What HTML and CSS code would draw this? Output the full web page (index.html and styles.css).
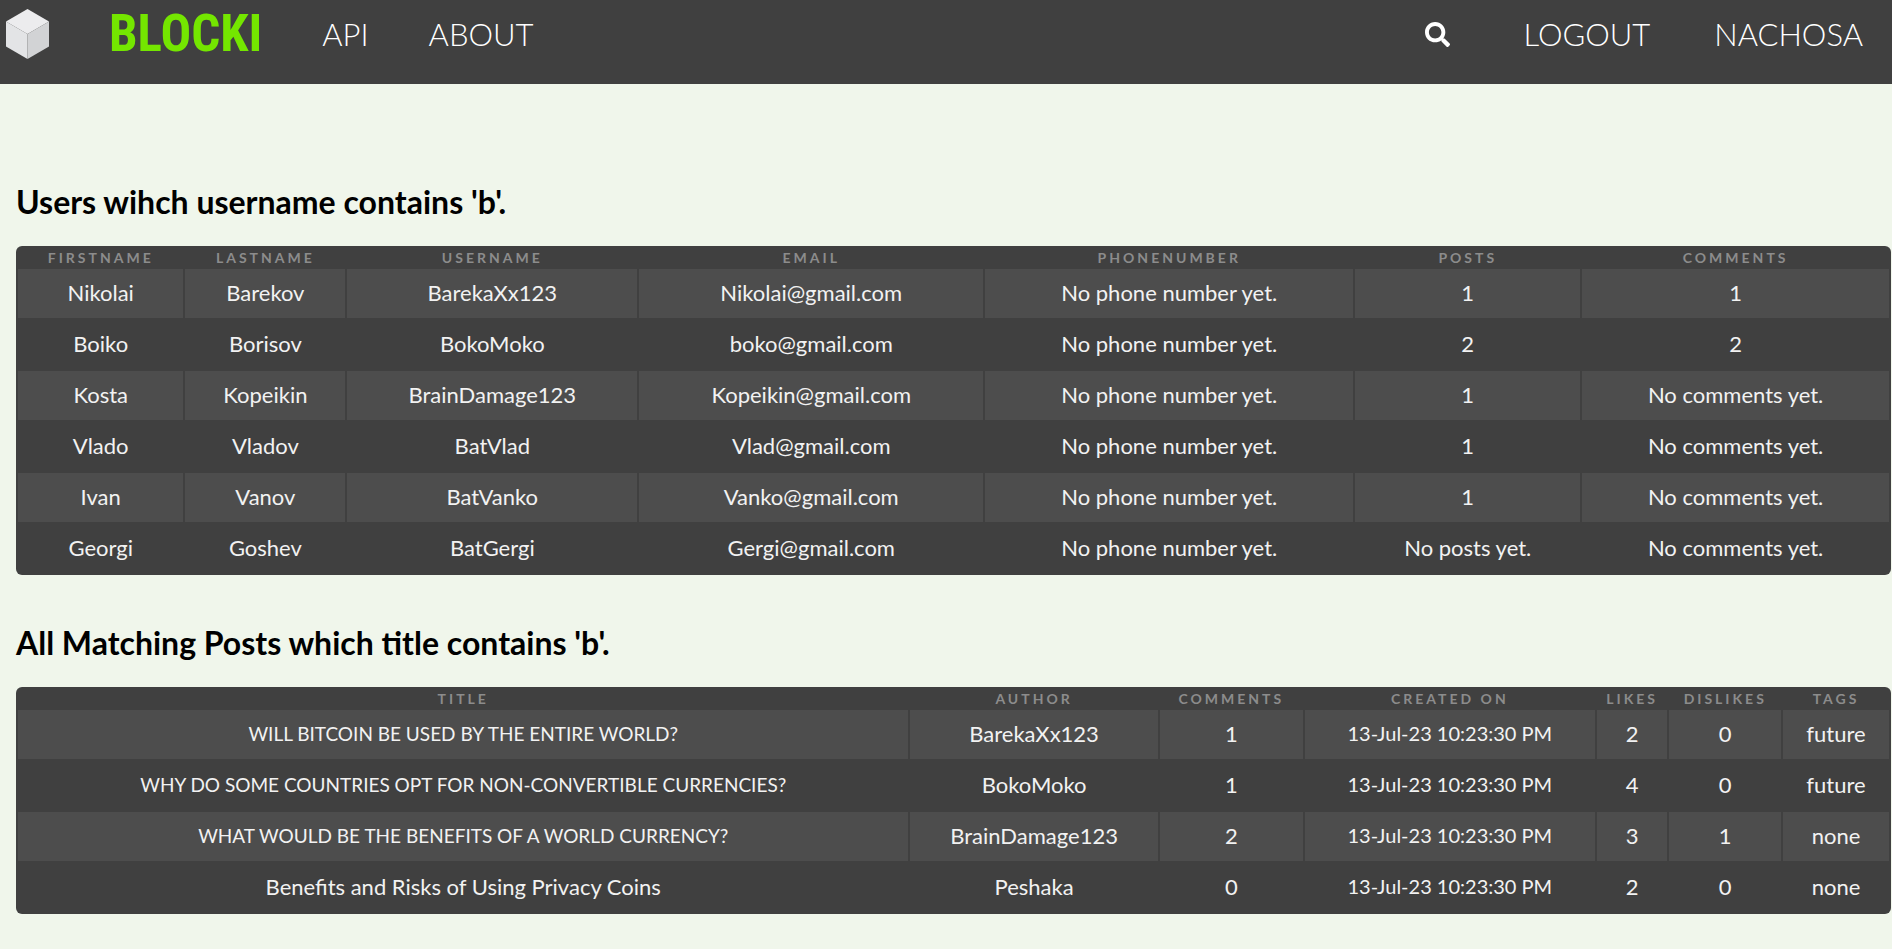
FILE: index.html
```html
<!DOCTYPE html>
<html lang="en">
<head>
<meta charset="utf-8">
<title>Blocki - Search</title>
<link rel="stylesheet" href="styles.css">
</head>
<body>
<header class="navbar">
  <nav class="nav-group nav-main">
    <a class="cube-link" href="#" aria-label="Home">
      <svg class="cube" viewBox="0 0 43 50" aria-hidden="true">
        <path fill="#ececee" d="M21.500 0 43 12.500 21.500 25 0 12.500z"/>
        <path fill="#e3e4e6" d="M0 12.500 21.500 25V50L0 37.500z"/>
        <path fill="#d2d3d5" d="M43 12.500 21.500 25V50L43 37.500z"/>
      </svg>
    </a>
    <a class="brand" href="#">BLOCKI</a>
    <a class="nav-link" href="#">API</a>
    <a class="nav-link" href="#">ABOUT</a>
  </nav>
  <nav class="nav-group nav-user">
    <button class="search-button" type="button" aria-label="Search">
      <svg class="search-icon" viewBox="0 0 512 512" aria-hidden="true">
        <path fill="#fff" d="M505 442.700L405.300 343c-4.500-4.500-10.600-7-17-7H372c27.600-35.300 44-79.700 44-128C416 93.100 322.900 0 208 0S0 93.100 0 208s93.100 208 208 208c48.300 0 92.700-16.400 128-44v16.300c0 6.400 2.500 12.500 7 17l99.700 99.700c9.400 9.400 24.600 9.400 33.900 0l28.300-28.300c9.400-9.400 9.400-24.600.1-34zM208 336c-70.700 0-128-57.200-128-128 0-70.700 57.200-128 128-128 70.700 0 128 57.200 128 128 0 70.700-57.200 128-128 128z"/>
      </svg>
    </button>
    <a class="nav-link" href="#">LOGOUT</a>
    <a class="nav-link" href="#">NACHOSA</a>
  </nav>
</header>
<main class="results">
  <section class="result-section">
    <h2 class="heading">Users wihch username contains 'b'.</h2>
    <table class="data-table users">
      <thead>
        <tr><th>FIRSTNAME</th><th>LASTNAME</th><th>USERNAME</th><th>EMAIL</th><th>PHONENUMBER</th><th>POSTS</th><th>COMMENTS</th></tr>
      </thead>
      <tbody>
        <tr><td>Nikolai</td><td>Barekov</td><td>BarekaXx123</td><td>Nikolai@gmail.com</td><td>No phone number yet.</td><td>1</td><td>1</td></tr>
        <tr><td>Boiko</td><td>Borisov</td><td>BokoMoko</td><td>boko@gmail.com</td><td>No phone number yet.</td><td>2</td><td>2</td></tr>
        <tr><td>Kosta</td><td>Kopeikin</td><td>BrainDamage123</td><td>Kopeikin@gmail.com</td><td>No phone number yet.</td><td>1</td><td>No comments yet.</td></tr>
        <tr><td>Vlado</td><td>Vladov</td><td>BatVlad</td><td>Vlad@gmail.com</td><td>No phone number yet.</td><td>1</td><td>No comments yet.</td></tr>
        <tr><td>Ivan</td><td>Vanov</td><td>BatVanko</td><td>Vanko@gmail.com</td><td>No phone number yet.</td><td>1</td><td>No comments yet.</td></tr>
        <tr><td>Georgi</td><td>Goshev</td><td>BatGergi</td><td>Gergi@gmail.com</td><td>No phone number yet.</td><td>No posts yet.</td><td>No comments yet.</td></tr>
      </tbody>
    </table>
  </section>
  <section class="result-section">
    <h2 class="heading">All Matching Posts which title contains 'b'.</h2>
    <table class="data-table posts">
      <thead>
        <tr><th>TITLE</th><th>AUTHOR</th><th>COMMENTS</th><th>CREATED ON</th><th>LIKES</th><th>DISLIKES</th><th>TAGS</th></tr>
      </thead>
      <tbody>
        <tr><td class="compact">WILL BITCOIN BE USED BY THE ENTIRE WORLD?</td><td>BarekaXx123</td><td>1</td><td class="date">13-Jul-23 10:23:30 PM</td><td>2</td><td>0</td><td>future</td></tr>
        <tr><td class="compact">WHY DO SOME COUNTRIES OPT FOR NON-CONVERTIBLE CURRENCIES?</td><td>BokoMoko</td><td>1</td><td class="date">13-Jul-23 10:23:30 PM</td><td>4</td><td>0</td><td>future</td></tr>
        <tr><td class="compact">WHAT WOULD BE THE BENEFITS OF A WORLD CURRENCY?</td><td>BrainDamage123</td><td>2</td><td class="date">13-Jul-23 10:23:30 PM</td><td>3</td><td>1</td><td>none</td></tr>
        <tr><td>Benefits and Risks of Using Privacy Coins</td><td>Peshaka</td><td>0</td><td class="date">13-Jul-23 10:23:30 PM</td><td>2</td><td>0</td><td>none</td></tr>
      </tbody>
    </table>
  </section>
</main>
</body>
</html>
```
FILE: styles.css
```css
* {
  box-sizing: border-box;
}

body {
  margin: 0;
  background: #f0f6eb;
  color: #000;
  font-family: "Century Gothic", Lato, sans-serif;
}

.navbar {
  display: flex;
  justify-content: space-between;
  padding: 0 29px 16px 6px;
  background: #404040;
}

.nav-group {
  display: flex;
  align-items: center;
  height: 68px;
  gap: 60px;
}

.cube-link {
  display: flex;
}

.cube {
  width: 43px;
  height: 50px;
}

.brand {
  color: #74e600;
  font-family: "Liberation Sans Narrow", "Roboto Condensed", "Liberation Sans", sans-serif;
  font-size: 51px;
  font-weight: 700;
  line-height: 60px;
  text-decoration: none;
}

.nav-link {
  color: #fff;
  font-size: 31px;
  font-weight: 300;
  line-height: 38px;
  text-decoration: none;
}

.nav-user {
  gap: 64px;
}

.search-button {
  display: flex;
  margin-right: 10px;
  padding: 0;
  border: 0;
  background: none;
  cursor: pointer;
}

.search-icon {
  width: 25px;
  height: 25px;
}

.results {
  padding: 98px 1px 0 16px;
}

.result-section {
  padding-bottom: 48px;
}

.result-section:last-child {
  padding-bottom: 24px;
}

.heading {
  margin: 0;
  padding-bottom: 24px;
  font-size: 32px;
  font-weight: 700;
  line-height: 40px;
}

.data-table {
  width: 100%;
  table-layout: fixed;
  border-collapse: separate;
  border-spacing: 2px;
  border-radius: 6px;
  background: #404040;
  color: #f2f2f2;
  text-align: center;
}

.data-table th {
  padding: 0;
  color: #8c8c8c;
  font-size: 14px;
  font-weight: 700;
  letter-spacing: 3px;
  line-height: 19px;
}

.data-table td {
  padding: 9px 0 11px;
  font-size: 22px;
  font-weight: 400;
  line-height: 29px;
}

.data-table .compact {
  font-size: 19px;
}

.data-table .date {
  font-size: 20px;
}

.data-table tbody tr:nth-child(odd) td {
  background: #4d4d4d;
}

.users th:nth-child(1) { width: 8.9%; }
.users th:nth-child(2) { width: 8.6%; }
.users th:nth-child(3) { width: 15.6%; }
.users th:nth-child(4) { width: 18.5%; }
.users th:nth-child(5) { width: 19.8%; }
.users th:nth-child(6) { width: 12.1%; }
.users th:nth-child(7) { width: 16.5%; }

.posts th:nth-child(1) { width: 47.9%; }
.posts th:nth-child(2) { width: 13.3%; }
.posts th:nth-child(3) { width: 7.7%; }
.posts th:nth-child(4) { width: 15.6%; }
.posts th:nth-child(5) { width: 3.8%; }
.posts th:nth-child(6) { width: 6%; }
.posts th:nth-child(7) { width: 5.7%; }
```
